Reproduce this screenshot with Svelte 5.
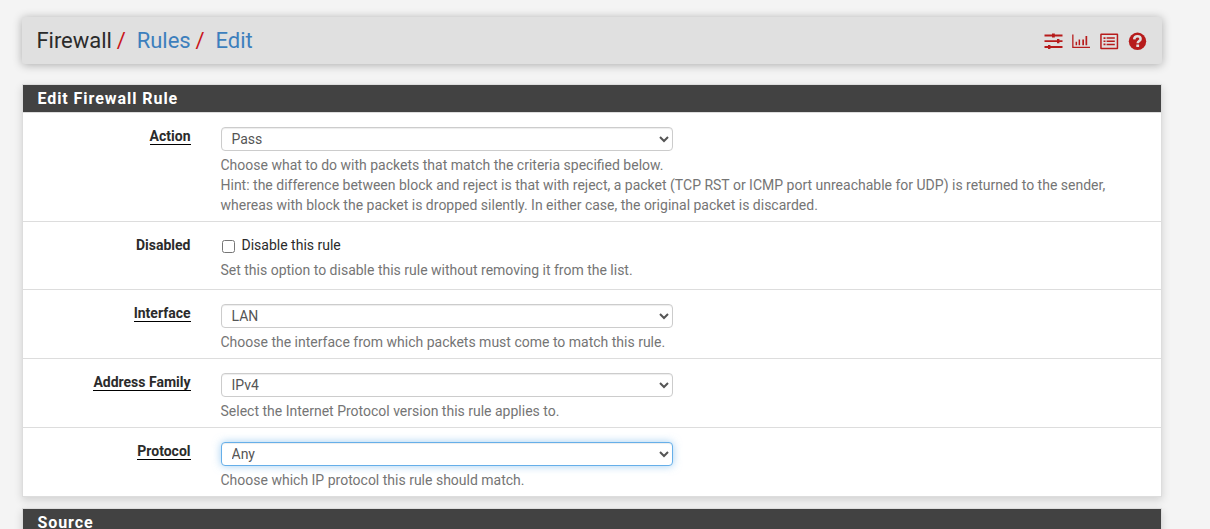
<script>
  const rows = [
    {
      label: 'Action', required: true, value: 'Pass', options: ['Pass', 'Block', 'Reject'],
      help: [
        'Choose what to do with packets that match the criteria specified below.',
        'Hint: the difference between block and reject is that with reject, a packet (TCP RST or ICMP port unreachable for UDP) is returned to the sender,',
        'whereas with block the packet is dropped silently. In either case, the original packet is discarded.'
      ]
    },
    { label: 'Disabled', check: 'Disable this rule', help: ['Set this option to disable this rule without removing it from the list.'] },
    { label: 'Interface', required: true, value: 'LAN', options: ['LAN', 'WAN'], help: ['Choose the interface from which packets must come to match this rule.'] },
    { label: 'Address Family', required: true, value: 'IPv4', options: ['IPv4', 'IPv6'], help: ['Select the Internet Protocol version this rule applies to.'] },
    { label: 'Protocol', required: true, focused: true, value: 'Any', options: ['Any', 'TCP', 'UDP'], help: ['Choose which IP protocol this rule should match.'] }
  ];
</script>

<div class="page">
  <header>
    <nav>
      <span>Firewall</span><i>/</i><a href="#rules">Rules</a><i>/</i><a href="#edit">Edit</a>
    </nav>
    <div class="icons">
      <svg width="20" height="18" viewBox="0 0 20 18">
        <path d="M1.500 2.600h18v1.900H1.500zM1.500 8.300h18v1.700H1.500zM1.500 14h18v1.900H1.500zM9 1.500h2.800v4.100H9zM14 7.100h2.400v4.200H14zM5 12.900h2.400v4.200H5z" />
      </svg>
      <svg width="20" height="18" viewBox="0 0 20 18">
        <path d="M1.200 2.400h1.300v12.300H19v1.300H1.200zM4.600 9.800h1.500v3.500H4.600zM7.600 7.500h1.500v5.800H7.600zM11.300 7.500h1.700v5.800h-1.700zM14.500 4h1.700v9.300h-1.700z" />
      </svg>
      <svg width="20" height="18" viewBox="0 0 20 18">
        <path fill-rule="evenodd" d="M2.200 1.500h16q1 0 1 1v13.700q0 1-1 1h-16q-1 0-1-1V2.500q0-1 1-1zM2.700 3v12.700h15V3z" />
        <path d="M4.500 5.200h2v1.700h-2zM4.500 8.400h2v1.700h-2zM4.500 11.600h2v1.700h-2zM7.600 5.300h8.200v1.500H7.600zM7.600 8.500h8.200V10H7.600zM7.600 11.700h8.200v1.500H7.600z" />
      </svg>
      <svg width="20" height="18" viewBox="0 0 20 18">
        <circle cx="10.500" cy="9.300" r="8.700" />
        <path class="mark" d="M7.200 7.300C7.400 5.200 8.700 4.300 10.400 4.300c2 0 3.200 1.100 3.200 2.600 0 2.200-2.900 2.200-2.900 4.400" />
        <rect class="dot" x="9.300" y="12.500" width="2.800" height="2.500" rx=".3" />
      </svg>
    </div>
  </header>

  <section>
    <h2>Edit Firewall Rule</h2>
    {#each rows as row}
      <div class="row" class:checkrow={row.check}>
        <div class="label"><span class:required={row.required}>{row.label}</span></div>
        <div class="field">
          {#if row.check}
            <label class="check"><input type="checkbox" />{row.check}</label>
          {:else}
            <select class:focused={row.focused} value={row.value}>
              {#each row.options as option}<option>{option}</option>{/each}
            </select>
          {/if}
          <div class="help">
            {#each row.help as line}<div>{line}</div>{/each}
          </div>
        </div>
      </div>
    {/each}
  </section>

  <section>
    <h2>Source</h2>
  </section>
</div>

<style>
  :global(body) { background: #f4f4f4; overflow: hidden; }
  .page {
    box-sizing: border-box;
    height: 529px;
    overflow: hidden;
    padding: 16.5px 48px 0 22px;
    font: 14px/20px Roboto, sans-serif;
    color: #2b2b2b;
  }
  header {
    box-sizing: border-box;
    height: 47.5px;
    margin-bottom: 20px;
    padding: 0 15px 0 14.5px;
    display: flex;
    align-items: center;
    justify-content: space-between;
    background: #e0e0e0;
    border-radius: 3px;
    box-shadow: 0 1px 10px rgba(0, 0, 0, 0.3);
  }
  nav { display: flex; padding-top: 1.5px; font-size: 22px; line-height: 28px; font-weight: 400; letter-spacing: -0.05px; }
  nav i { font-style: normal; color: #c9151b; margin: 0 11px 0 5px; }
  a { color: #3d7fbd; text-decoration: none; }
  .icons { display: flex; gap: 8px; padding-top: 1.5px; }
  svg { display: block; fill: #b71c1c; }
  .mark { fill: none; stroke: #e0e0e0; stroke-width: 2.5; }
  .dot { fill: #e0e0e0; }
  section {
    box-sizing: border-box;
    width: 1140px;
    margin-bottom: 11px;
    background: #fff;
    border: 1px solid #ddd;
    box-shadow: 0 3px 8px rgba(0, 0, 0, 0.15);
  }
  h2 {
    margin: 0;
    box-sizing: border-box;
    height: 28px;
    padding: 0 0 0 14.4px;
    background: #424242;
    border-bottom: 1px solid #ddd;
    color: #fff;
    font-size: 16px;
    font-weight: 700;
    line-height: 27px;
    letter-spacing: 0.95px;
  }
  .row { display: flex; padding: 14px 0 6px; border-bottom: 1px solid #ddd; }
  .row:last-child { border-bottom: 0; }
  .label { width: 167.5px; margin: -1px 30px 0 0; text-align: right; font-weight: 700; }
  .required { border-bottom: 1px solid #000; }
  .field { flex: 1; }
  select {
    display: block;
    box-sizing: border-box;
    width: 452px;
    height: 24px;
    padding: 0 6px;
    border: 1px solid #ccc;
    border-radius: 4px;
    outline: 0;
    background-color: #fff;
    box-shadow: inset 0 1px 1px rgba(0, 0, 0, 0.075);
    color: #555;
    font: 14px Roboto, sans-serif;
  }
  .focused {
    border-color: #66afe9;
    box-shadow: inset 0 1px 1px rgba(0, 0, 0, 0.075), 0 0 8px rgba(102, 175, 233, 0.6);
  }
  .help { margin-top: 4px; color: #757575; white-space: nowrap; }
  .checkrow { padding-bottom: 9px; }
  .check { display: flex; align-items: center; height: 20px; margin-top: -1px; }
  .check input { width: 13px; height: 13px; margin: 3px 7px 0 1px; }
  .checkrow .help { margin-top: 5px; }
</style>
